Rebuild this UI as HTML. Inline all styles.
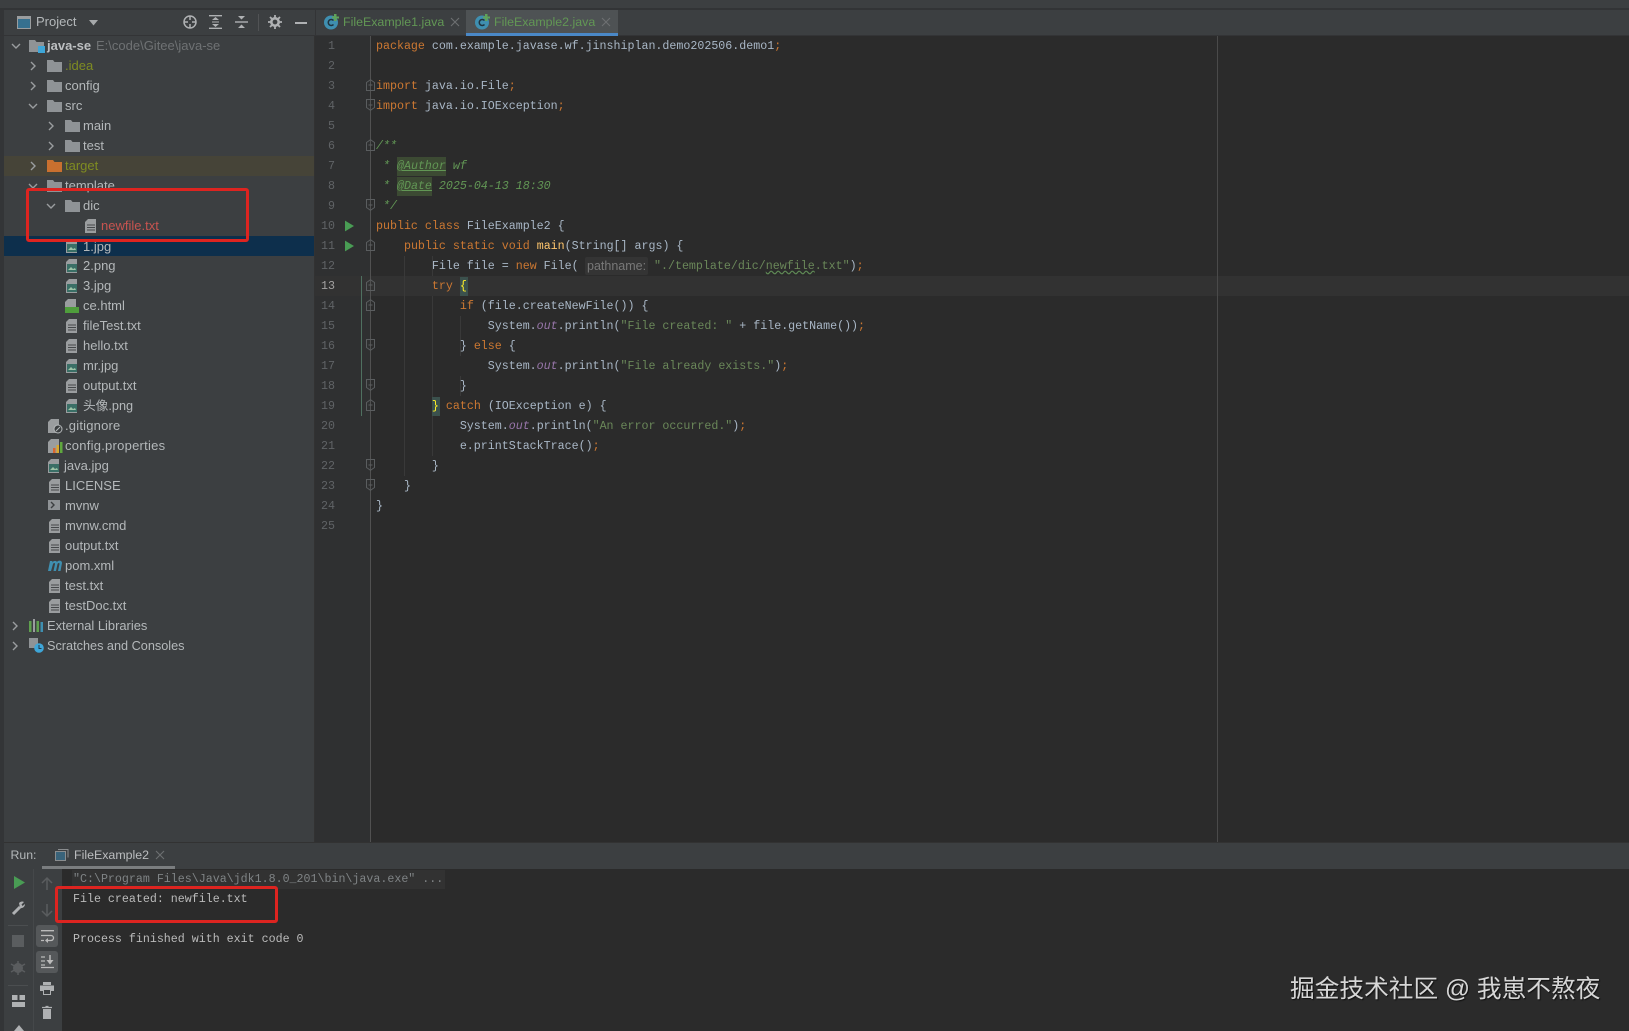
<!DOCTYPE html>
<html lang="zh"><head><meta charset="utf-8"><title>IDE</title>
<style>
html,body{margin:0;padding:0;background:#2b2b2b}
#p{position:relative;width:1629px;height:1031px;overflow:hidden;background:#2b2b2b;font-family:"Liberation Sans","Noto Sans CJK SC",sans-serif;font-size:13px;color:#bbb;filter:blur(.35px)}
.a{position:absolute}
.t{position:absolute;height:20px;line-height:20px;white-space:pre;color:#b4b8ba}
.c{position:absolute;left:376px;height:20px;line-height:20px;margin-top:1px;white-space:pre;font-family:"Liberation Mono",monospace;font-size:11.65px;color:#a9b7c6}
.n{position:absolute;left:315px;width:20px;text-align:right;height:20px;line-height:20px;margin-top:1px;font-family:"Liberation Mono",monospace;font-size:11.65px;color:#606366}
.k{color:#cc7832}.s{color:#6a8759}.d{color:#629755;font-style:italic}.o{color:#9876aa;font-style:italic}.m{color:#ffc66d}
.g{position:absolute;width:1px;background:#393939}
svg{position:absolute;overflow:visible}
.box{position:absolute;border:3px solid #dd2420;border-radius:3px;box-sizing:border-box}
</style></head><body><div id="p">
<svg width="0" height="0" style="left:0;top:0"><defs>
<symbol id="r" viewBox="0 0 10 10"><path d="M3 1l4 4-4 4" fill="none" stroke="#9a9d9f" stroke-width="1.4"/></symbol>
<symbol id="dn" viewBox="0 0 10 10"><path d="M1 3l4 4 4-4" fill="none" stroke="#9a9d9f" stroke-width="1.4"/></symbol>
<symbol id="f" viewBox="0 0 15 13"><path d="M0 1h6l1.500 2H15v10H0z" fill="#8f9396"/></symbol>
<symbol id="fo" viewBox="0 0 15 13"><path d="M0 1h6l1.500 2H15v10H0z" fill="#c9702f"/></symbol>
<symbol id="tx" viewBox="0 0 12 14"><path d="M3 0h8v14H0V3z" fill="#9a9d9f"/><path d="M2 6h8M2 8.500h8M2 11h8" stroke="#45484a" stroke-width="1"/></symbol>
<symbol id="im" viewBox="0 0 12 14"><path d="M3 0h8v14H0V3z" fill="#9a9d9f"/><rect x="1" y="5" width="10" height="8" fill="#3a6f66"/><path d="M2 11l3-3 2 2 2-1 1 2z" fill="#9fc5a8"/></symbol>
<symbol id="fd" viewBox="0 0 9 12"><path d="M0.500 3.500L4.500 0.700l4 2.800v8H0.500zM2.500 6h4" fill="none" stroke="#5a5d5f" stroke-width="1"/></symbol>
<symbol id="fu" viewBox="0 0 9 12"><path d="M0.500 0.500h8v8l-4 2.800-4-2.800zM2.500 6h4" fill="none" stroke="#5a5d5f" stroke-width="1"/></symbol>
<symbol id="pl" viewBox="0 0 10 12"><path d="M0 0l10 6-10 6z" fill="#499c54"/></symbol>
<symbol id="jc" viewBox="0 0 16 16"><circle cx="7" cy="8.500" r="7" fill="#3f8fb0"/><path d="M9.500 6.500A3 3 0 1 0 9.500 10.500" fill="none" stroke="#20333f" stroke-width="1.500"/><path d="M10 0h2.500v2.500H15v2h-2.500V7H10V4.500H8v-2h2z" fill="#5fa35a"/></symbol>
</defs></svg>

<!-- top strip -->
<div class="a" style="left:0;top:0;width:1629px;height:36px;background:#3c3f41"></div>
<div class="a" style="left:0;top:8px;width:1629px;height:2px;background:#323436"></div>
<div class="a" style="left:0;top:36px;width:315px;height:806px;background:#3c3f41"></div>
<div class="a" style="left:0;top:10px;width:4px;height:832px;background:#333537"></div>
<div class="a" style="left:0;top:35px;width:1629px;height:1px;background:#333436"></div>

<!-- project header -->
<svg style="left:17px;top:16px" width="14" height="13"><rect x=".5" y=".5" width="13" height="12" fill="#36708f" stroke="#9a9d9f"/><rect x="1" y="1" width="12" height="2" fill="#9a9d9f"/></svg>
<div class="t" style="left:36px;top:12px;color:#b4b8ba">Project</div>
<svg style="left:89px;top:20px" width="9" height="6"><path d="M0 0h9L4.500 5.500z" fill="#a6a9ab"/></svg>
<svg style="left:183px;top:15px" width="14" height="14"><circle cx="7" cy="7" r="6" fill="none" stroke="#afb1b3" stroke-width="1.500"/><path d="M7 1v4M7 9v4M1 7h4M9 7h4" stroke="#afb1b3" stroke-width="1.500"/></svg>
<svg style="left:209px;top:15px" width="13" height="14"><path d="M0 .7h13M0 13.300h13" stroke="#afb1b3" stroke-width="1.400"/><path d="M3 5l3.500-3L10 5zM3 9l3.500 3L10 9z" fill="#afb1b3"/><path d="M3 7h7" stroke="#afb1b3"/></svg>
<svg style="left:235px;top:15px" width="13" height="14"><path d="M0 7h13" stroke="#afb1b3" stroke-width="1.400"/><path d="M3 1l3.500 3.500L10 1zM3 13l3.500-3.500L10 13z" fill="#afb1b3"/></svg>
<div class="a" style="left:258px;top:14px;width:1px;height:17px;background:#515355"></div>
<svg style="left:268px;top:15px" width="14" height="14"><circle cx="7" cy="7" r="3.700" fill="none" stroke="#afb1b3" stroke-width="2.600"/><path d="M7 0v3M7 11v3M0 7h3M11 7h3M2 2l2 2M10 10l2 2M12 2l-2 2M4 10l-2 2" stroke="#afb1b3" stroke-width="1.800"/></svg>
<div class="a" style="left:295px;top:22px;width:12px;height:2px;background:#afb1b3"></div>

<!-- tabs -->
<div class="a" style="left:466px;top:10px;width:152px;height:23px;background:#4e5254"></div>
<div class="a" style="left:466px;top:33px;width:152px;height:3px;background:#4a88c7"></div>
<div class="a" style="left:315px;top:10px;width:1px;height:26px;background:#333436"></div>
<svg style="left:324px;top:14px" width="16" height="16"><use href="#jc"/></svg>
<div class="t" style="left:343px;top:12px;color:#629755;font-size:12.4px">FileExample1.java</div>
<svg style="left:451px;top:18px" width="8" height="8"><path d="M0 0l8 8M8 0L0 8" stroke="#6d7072" stroke-width="1.100"/></svg>
<svg style="left:475px;top:14px" width="16" height="16"><use href="#jc"/></svg>
<div class="t" style="left:494px;top:12px;color:#629755;font-size:12.4px">FileExample2.java</div>
<svg style="left:602px;top:18px" width="8" height="8"><path d="M0 0l8 8M8 0L0 8" stroke="#6d7072" stroke-width="1.100"/></svg>

<!-- tree highlights -->
<div class="a" style="left:4px;top:156px;width:310px;height:20px;background:#464438"></div>
<div class="a" style="left:4px;top:236px;width:310px;height:20px;background:#0d2f4c"></div>
<div class="a" style="left:314px;top:36px;width:1px;height:806px;background:#323232"></div>

<!-- tree -->
<svg style="left:11px;top:41px" width="10" height="10"><use href="#dn"/></svg>
<svg style="left:29px;top:39px" width="15" height="13"><use href="#f"/><rect x="9" y="7" width="7" height="7" fill="#3ea6d8"/></svg>
<div class="t" style="left:47px;top:36px;font-weight:bold;color:#bcbfc1">java-se</div>
<div class="t" style="left:96px;top:36px;color:#6f7274;font-size:13px">E:\code\Gitee\java-se</div>

<svg style="left:28px;top:61px" width="10" height="10"><use href="#r"/></svg><svg style="left:47px;top:59px" width="15" height="13"><use href="#f"/></svg><div class="t" style="left:65px;top:56px;color:#7f8c22">.idea</div>
<svg style="left:28px;top:81px" width="10" height="10"><use href="#r"/></svg><svg style="left:47px;top:79px" width="15" height="13"><use href="#f"/></svg><div class="t" style="left:65px;top:76px">config</div>
<svg style="left:28px;top:101px" width="10" height="10"><use href="#dn"/></svg><svg style="left:47px;top:99px" width="15" height="13"><use href="#f"/></svg><div class="t" style="left:65px;top:96px">src</div>
<svg style="left:46px;top:121px" width="10" height="10"><use href="#r"/></svg><svg style="left:65px;top:119px" width="15" height="13"><use href="#f"/></svg><div class="t" style="left:83px;top:116px">main</div>
<svg style="left:46px;top:141px" width="10" height="10"><use href="#r"/></svg><svg style="left:65px;top:139px" width="15" height="13"><use href="#f"/></svg><div class="t" style="left:83px;top:136px">test</div>
<svg style="left:28px;top:161px" width="10" height="10"><use href="#r"/></svg><svg style="left:47px;top:159px" width="15" height="13"><use href="#fo"/></svg><div class="t" style="left:65px;top:156px;color:#7f8c22">target</div>
<svg style="left:28px;top:181px" width="10" height="10"><use href="#dn"/></svg><svg style="left:47px;top:179px" width="15" height="13"><use href="#f"/></svg><div class="t" style="left:65px;top:176px">template</div>
<svg style="left:46px;top:201px" width="10" height="10"><use href="#dn"/></svg><svg style="left:65px;top:199px" width="15" height="13"><use href="#f"/></svg><div class="t" style="left:83px;top:196px">dic</div>
<svg style="left:85px;top:219px" width="12" height="14"><use href="#tx"/></svg><div class="t" style="left:101px;top:216px;color:#c75450">newfile.txt</div>
<svg style="left:66px;top:239px" width="12" height="14"><use href="#im"/></svg><div class="t" style="left:83px;top:237px">1.jpg</div>
<svg style="left:66px;top:259px" width="12" height="14"><use href="#im"/></svg><div class="t" style="left:83px;top:256px">2.png</div>
<svg style="left:66px;top:279px" width="12" height="14"><use href="#im"/></svg><div class="t" style="left:83px;top:276px">3.jpg</div>
<svg style="left:65px;top:299px" width="14" height="14"><path d="M3 0h8v10H0V3z" fill="#9a9d9f"/><rect x="0" y="8" width="14" height="6" fill="#4f9e3c"/></svg><div class="t" style="left:83px;top:296px">ce.html</div>
<svg style="left:66px;top:319px" width="12" height="14"><use href="#tx"/></svg><div class="t" style="left:83px;top:316px">fileTest.txt</div>
<svg style="left:66px;top:339px" width="12" height="14"><use href="#tx"/></svg><div class="t" style="left:83px;top:336px">hello.txt</div>
<svg style="left:66px;top:359px" width="12" height="14"><use href="#im"/></svg><div class="t" style="left:83px;top:356px">mr.jpg</div>
<svg style="left:66px;top:379px" width="12" height="14"><use href="#tx"/></svg><div class="t" style="left:83px;top:376px">output.txt</div>
<svg style="left:66px;top:399px" width="12" height="14"><use href="#im"/></svg><div class="t" style="left:83px;top:396px;font-size:12.7px">头像.png</div>
<svg style="left:48px;top:419px" width="14" height="14"><path d="M3 0h8v14H0V3z" fill="#9a9d9f"/><circle cx="10" cy="10" r="4" fill="#3c3f41" stroke="#b4b8ba"/><path d="M8 12l4-4" stroke="#b4b8ba"/></svg><div class="t" style="left:65px;top:416px;letter-spacing:.2px">.gitignore</div>
<svg style="left:48px;top:439px" width="14" height="14"><path d="M3 0h8v14H0V3z" fill="#9a9d9f"/><rect x="5" y="9" width="2.500" height="5" fill="#d9662e"/><rect x="8.500" y="6" width="2.500" height="8" fill="#d9a92e"/><rect x="12" y="3" width="2.500" height="11" fill="#5fa83e"/></svg><div class="t" style="left:65px;top:436px;letter-spacing:.25px">config.properties</div>
<svg style="left:48px;top:459px" width="12" height="14"><use href="#im"/></svg><div class="t" style="left:64px;top:456px">java.jpg</div>
<svg style="left:49px;top:479px" width="12" height="14"><use href="#tx"/></svg><div class="t" style="left:65px;top:476px">LICENSE</div>
<svg style="left:48px;top:500px" width="12" height="10"><rect width="12" height="10" fill="#8f9396"/><path d="M3 2l3 3-3 3" fill="none" stroke="#3c3f41" stroke-width="1.400"/></svg><div class="t" style="left:65px;top:496px">mvnw</div>
<svg style="left:49px;top:519px" width="12" height="14"><use href="#tx"/></svg><div class="t" style="left:65px;top:516px">mvnw.cmd</div>
<svg style="left:49px;top:539px" width="12" height="14"><use href="#tx"/></svg><div class="t" style="left:65px;top:536px">output.txt</div>
<svg style="left:47px;top:560px" width="15" height="11"><path d="M1 11L3 1h2.500l-.3 1.500C6 1 9 0 10 2c1-2 5-2 5 1l-1.500 8h-2.500L12.500 4c0-1.500-1.500-1-2 0L9 11H6.500L8 4c0-1.500-1.500-1-2 0L4 11z" fill="#3f8fb0"/></svg><div class="t" style="left:65px;top:556px">pom.xml</div>
<svg style="left:49px;top:579px" width="12" height="14"><use href="#tx"/></svg><div class="t" style="left:65px;top:576px">test.txt</div>
<svg style="left:49px;top:599px" width="12" height="14"><use href="#tx"/></svg><div class="t" style="left:65px;top:596px">testDoc.txt</div>
<svg style="left:10px;top:621px" width="10" height="10"><use href="#r"/></svg>
<svg style="left:29px;top:619px" width="14" height="13"><rect x="0" y="2" width="2.500" height="11" fill="#5fa04e"/><rect x="4" y="0" width="2" height="13" fill="#9a9d9f"/><rect x="7.500" y="2" width="2.500" height="11" fill="#5fa04e"/><rect x="11.500" y="3" width="2.500" height="10" fill="#3f8fb0"/></svg>
<div class="t" style="left:47px;top:616px;font-size:12.9px">External Libraries</div>
<svg style="left:10px;top:641px" width="10" height="10"><use href="#r"/></svg>
<svg style="left:29px;top:638px" width="15" height="15"><rect width="9" height="10" fill="#8f9396"/><circle cx="10" cy="10" r="4.800" fill="#3ea6d8"/><path d="M10 7v3.500h2.500" fill="none" stroke="#27384a"/></svg>
<div class="t" style="left:47px;top:636px;font-size:12.7px">Scratches and Consoles</div>

<!-- editor -->
<div class="a" style="left:315px;top:36px;width:55px;height:806px;background:#2f3031"></div>
<div class="a" style="left:315px;top:276px;width:1314px;height:20px;background:#323232"></div>
<div class="a" style="left:370px;top:36px;width:1px;height:806px;background:#515151"></div>
<div class="a" style="left:1217px;top:36px;width:1px;height:806px;background:#4a4a4a"></div>
<div class="a" style="left:361px;top:276px;width:1px;height:140px;background:#4f7060"></div>
<div class="g" style="left:404px;top:256px;height:220px"></div>
<div class="g" style="left:432px;top:296px;height:140px"></div>
<div class="g" style="left:460px;top:316px;height:40px"></div>
<div class="g" style="left:460px;top:376px;height:20px"></div>
<div class="g" style="left:432px;top:256px;height:20px"></div>
<div class="g" style="left:432px;top:416px;height:40px"></div>

<svg style="left:345px;top:220px" width="9" height="12"><use href="#pl"/></svg>
<svg style="left:345px;top:240px" width="9" height="12"><use href="#pl"/></svg>
<svg style="left:366px;top:79px" width="9" height="12"><use href="#fd"/></svg>
<svg style="left:366px;top:99px" width="9" height="12"><use href="#fu"/></svg>
<svg style="left:366px;top:139px" width="9" height="12"><use href="#fd"/></svg>
<svg style="left:366px;top:199px" width="9" height="12"><use href="#fu"/></svg>
<svg style="left:366px;top:239px" width="9" height="12"><use href="#fd"/></svg>
<svg style="left:366px;top:279px" width="9" height="12"><use href="#fd"/></svg>
<svg style="left:366px;top:299px" width="9" height="12"><use href="#fd"/></svg>
<svg style="left:366px;top:339px" width="9" height="12"><use href="#fu"/></svg>
<svg style="left:366px;top:379px" width="9" height="12"><use href="#fu"/></svg>
<svg style="left:366px;top:399px" width="9" height="12"><use href="#fd"/></svg>
<svg style="left:366px;top:459px" width="9" height="12"><use href="#fu"/></svg>
<svg style="left:366px;top:479px" width="9" height="12"><use href="#fu"/></svg>

<div class="n" style="top:36px">1</div><div class="n" style="top:56px">2</div><div class="n" style="top:76px">3</div><div class="n" style="top:96px">4</div><div class="n" style="top:116px">5</div><div class="n" style="top:136px">6</div><div class="n" style="top:156px">7</div><div class="n" style="top:176px">8</div><div class="n" style="top:196px">9</div><div class="n" style="top:216px">10</div><div class="n" style="top:236px">11</div><div class="n" style="top:256px">12</div><div class="n" style="top:276px;color:#a4a3a3">13</div><div class="n" style="top:296px">14</div><div class="n" style="top:316px">15</div><div class="n" style="top:336px">16</div><div class="n" style="top:356px">17</div><div class="n" style="top:376px">18</div><div class="n" style="top:396px">19</div><div class="n" style="top:416px">20</div><div class="n" style="top:436px">21</div><div class="n" style="top:456px">22</div><div class="n" style="top:476px">23</div><div class="n" style="top:496px">24</div><div class="n" style="top:516px">25</div>

<div class="c" style="top:36px"><span class="k">package</span> com.example.javase.wf.jinshiplan.demo202506.demo1<span class="k">;</span></div>
<div class="c" style="top:76px"><span class="k">import</span> java.io.File<span class="k">;</span></div>
<div class="c" style="top:96px"><span class="k">import</span> java.io.IOException<span class="k">;</span></div>
<div class="c" style="top:136px"><span class="d">/**</span></div>
<div class="a" style="left:397px;top:157px;width:49px;height:19px;background:#3c4a33"></div>
<div class="a" style="left:397px;top:177px;width:35px;height:19px;background:#3c4a33"></div>
<div class="c" style="top:156px"><span class="d"> * <u>@Author</u> wf</span></div>
<div class="c" style="top:176px"><span class="d"> * <u>@Date</u> 2025-04-13 18:30</span></div>
<div class="c" style="top:196px"><span class="d"> */</span></div>
<div class="c" style="top:216px"><span class="k">public class</span> FileExample2 {</div>
<div class="c" style="top:236px">    <span class="k">public static void</span> <span class="m">main</span>(String[] args) {</div>
<div class="c" style="top:256px">        File file = <span class="k">new</span> File(</div>
<div class="a" style="left:585px;top:257px;width:63px;height:18px;background:#343434;border-radius:2px;line-height:18px;font-size:12.500px;color:#787878;padding-left:2px;box-sizing:border-box">pathname:</div>
<div class="c" style="top:256px;left:654px"><span class="s">"./template/dic/<span style="text-decoration:underline wavy #5f8a55">newfile</span>.txt"</span>)<span class="k">;</span></div>
<div class="a" style="left:460px;top:277px;width:8px;height:19px;background:#3b514d"></div>
<div class="a" style="left:432px;top:397px;width:8px;height:19px;background:#3b514d"></div>
<div class="c" style="top:276px">        <span class="k">try</span> <span style="color:#ffef28">{</span></div>
<div class="c" style="top:296px">            <span class="k">if</span> (file.createNewFile()) {</div>
<div class="c" style="top:316px">                System.<span class="o">out</span>.println(<span class="s">"File created: "</span> + file.getName())<span class="k">;</span></div>
<div class="c" style="top:336px">            } <span class="k">else</span> {</div>
<div class="c" style="top:356px">                System.<span class="o">out</span>.println(<span class="s">"File already exists."</span>)<span class="k">;</span></div>
<div class="c" style="top:376px">            }</div>
<div class="c" style="top:396px">        <span style="color:#ffef28">}</span> <span class="k">catch</span> (IOException e) {</div>
<div class="c" style="top:416px">            System.<span class="o">out</span>.println(<span class="s">"An error occurred."</span>)<span class="k">;</span></div>
<div class="c" style="top:436px">            e.printStackTrace()<span class="k">;</span></div>
<div class="c" style="top:456px">        }</div>
<div class="c" style="top:476px">    }</div>
<div class="c" style="top:496px">}</div>

<!-- run panel -->
<div class="a" style="left:0;top:842px;width:1629px;height:27px;background:#3c3f41;border-top:1px solid #323232;box-sizing:border-box"></div>
<div class="a" style="left:0;top:869px;width:62px;height:162px;background:#3c3f41"></div>
<div class="a" style="left:0;top:842px;width:4px;height:189px;background:#333537"></div>
<div class="a" style="left:33px;top:869px;width:1px;height:162px;background:#45484a"></div>
<div class="t" style="left:10.5px;top:845px;font-size:12.3px">Run:</div>
<svg style="left:55px;top:848px" width="14" height="13"><rect x=".5" y="3.500" width="10" height="9" fill="#39637a" stroke="#8a8d8f"/><path d="M3 1.500h10v8" fill="none" stroke="#8a8d8f"/></svg>
<div class="t" style="left:74px;top:845px;color:#bbbdbf;font-size:12.4px">FileExample2</div>
<svg style="left:156px;top:851px" width="8" height="8"><path d="M0 0l8 8M8 0L0 8" stroke="#6d7072" stroke-width="1.100"/></svg>
<div class="a" style="left:42px;top:866px;width:133px;height:3px;background:#7a7d7f"></div>

<svg style="left:14px;top:876px" width="11" height="13"><path d="M0 0l11 6.500L0 13z" fill="#499c54"/></svg>
<svg style="left:11px;top:901px" width="15" height="15"><path d="M2 13L9 6" stroke="#afb1b3" stroke-width="3"/><path d="M8 2a4 4 0 0 1 5-1l-2.500 2.500 1 1.500L14 3a4 4 0 0 1-5 4z" fill="#afb1b3"/></svg>
<div class="a" style="left:8px;top:925px;width:20px;height:1px;background:#4b4e50"></div>
<div class="a" style="left:12px;top:935px;width:12px;height:12px;background:#5a5d5f"></div>
<svg style="left:11px;top:961px" width="15" height="15"><circle cx="7" cy="7" r="5" fill="#5a5d5f"/><path d="M0 3l14 8M14 3L0 11M7 0v14" stroke="#5a5d5f" stroke-width="1.500"/></svg>
<div class="a" style="left:8px;top:985px;width:20px;height:1px;background:#4b4e50"></div>
<svg style="left:12px;top:995px" width="13" height="12"><path d="M0 0h5.500v5H0zM7.500 0H13v5H7.500zM0 7h13v5H0z" fill="#afb1b3"/></svg>
<svg style="left:14px;top:1025px" width="10" height="6"><path d="M0 6l5-6 5 6z" fill="#afb1b3"/></svg>
<svg style="left:41px;top:877px" width="12" height="13"><path d="M6 13V1M1 6l5-5 5 5" fill="none" stroke="#5a5d5f" stroke-width="1.500"/></svg>
<svg style="left:41px;top:904px" width="12" height="13"><path d="M6 0v12M1 7l5 5 5-5" fill="none" stroke="#5a5d5f" stroke-width="1.500"/></svg>
<div class="a" style="left:36px;top:925px;width:22px;height:22px;background:#55585a;border-radius:3px"></div>
<svg style="left:41px;top:930px" width="13" height="12"><path d="M0 .7h13M0 5.500h10a2.500 2.500 0 0 1 0 5H6M0 10.500h3" fill="none" stroke="#bbb" stroke-width="1.300"/><path d="M7 8v5L4 10.500z" fill="#bbb"/></svg>
<div class="a" style="left:36px;top:951px;width:22px;height:22px;background:#55585a;border-radius:3px"></div>
<svg style="left:41px;top:955px" width="13" height="13"><path d="M0 2h4M0 6h4M0 10h4M0 12.500h13" stroke="#bbb" stroke-width="1.300"/><path d="M9 0v7" stroke="#bbb" stroke-width="1.500"/><path d="M5.500 5h7L9 9.500z" fill="#bbb"/></svg>
<svg style="left:40px;top:982px" width="14" height="13"><rect x="3" y="0" width="8" height="3" fill="#afb1b3"/><rect x="0" y="3.500" width="14" height="5.500" fill="#afb1b3"/><path d="M3.500 8v4.500h7V8" fill="#3c3f41" stroke="#afb1b3"/></svg>
<svg style="left:42px;top:1005px" width="10" height="14"><path d="M3.500 1.500h3M0 2.500h10" stroke="#afb1b3" stroke-width="1.200"/><path d="M1 4h8v10H1z" fill="#afb1b3"/></svg>

<div class="a" style="left:72px;top:870px;width:373px;height:19px;background:#323232"></div>
<div class="c" style="left:73px;top:869px;color:#7f8385">"C:\Program Files\Java\jdk1.8.0_201\bin\java.exe" ...</div>
<div class="c" style="left:73px;top:889px;color:#bbb">File created: newfile.txt</div>
<div class="c" style="left:73px;top:929px;color:#bbb">Process finished with exit code 0</div>

<!-- annotations -->
<div class="box" style="left:26px;top:188px;width:223px;height:54px"></div>
<div class="box" style="left:55px;top:886px;width:223px;height:37px"></div>

<!-- watermark -->
<div class="a" style="left:1290px;top:972px;height:36px;line-height:36px;font-size:24.7px;white-space:pre;color:#d6d6d6;font-family:'Liberation Sans','Noto Sans CJK SC',sans-serif;text-shadow:1px 1px 1px #111">掘金技术社区 @ 我崽不熬夜</div>
</div></body></html>
